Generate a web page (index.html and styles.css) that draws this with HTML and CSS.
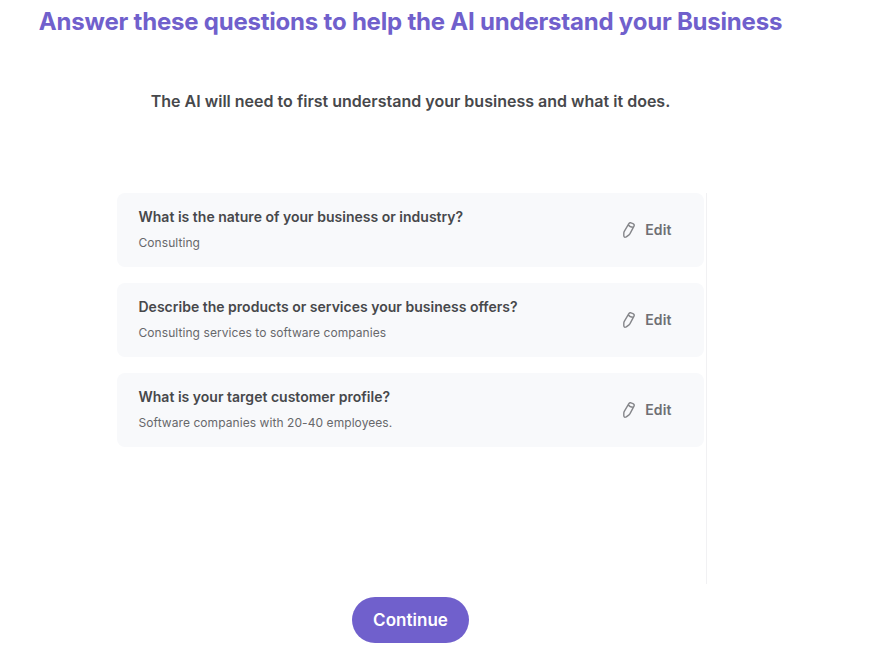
FILE: index.html
```html
<!DOCTYPE html>
<html lang="en">
<head>
<meta charset="utf-8">
<title>Business questions</title>
<link rel="stylesheet" href="styles.css">
</head>
<body>
<main class="page">
<h1 class="title">Answer these questions to help the AI understand your Business</h1>
<p class="intro">The AI will need to first understand your business and what it does.</p>
<section class="list">
<article class="card">
<div><h2 class="question">What is the nature of your business or industry?</h2><p class="answer">Consulting</p></div>
<button class="edit"><svg class="icon" viewBox="0 0 14 18"><path d="M2.3 10.4 6.7 2.8Q7.5 1.5 8.9 1.8L11 2.6Q12.8 3.5 12 5.2L8 12.7Q7.6 13.4 7 13.9L4.3 15.9Q2 17 1.8 14.8V12.2Q1.8 11.3 2.3 10.4ZM6.5 3.9Q7.7 6.2 11.1 6.3"/></svg><span>Edit</span></button>
</article>
<article class="card">
<div><h2 class="question">Describe the products or services your business offers?</h2><p class="answer">Consulting services to software companies</p></div>
<button class="edit"><svg class="icon" viewBox="0 0 14 18"><path d="M2.3 10.4 6.7 2.8Q7.5 1.5 8.9 1.8L11 2.6Q12.8 3.5 12 5.2L8 12.7Q7.6 13.4 7 13.9L4.3 15.9Q2 17 1.8 14.8V12.2Q1.8 11.3 2.3 10.4ZM6.5 3.9Q7.7 6.2 11.1 6.3"/></svg><span>Edit</span></button>
</article>
<article class="card">
<div><h2 class="question">What is your target customer profile?</h2><p class="answer">Software companies with 20-40 employees.</p></div>
<button class="edit"><svg class="icon" viewBox="0 0 14 18"><path d="M2.3 10.4 6.7 2.8Q7.5 1.5 8.9 1.8L11 2.6Q12.8 3.5 12 5.2L8 12.7Q7.6 13.4 7 13.9L4.3 15.9Q2 17 1.8 14.8V12.2Q1.8 11.3 2.3 10.4ZM6.5 3.9Q7.7 6.2 11.1 6.3"/></svg><span>Edit</span></button>
</article>
</section>
<button class="continue">Continue</button>
</main>
</body>
</html>
```
FILE: styles.css
```css
* { box-sizing: border-box; margin: 0; }
body { background: #fff; font-family: Inter, sans-serif; color: #47484b; }
button { font: inherit; border: 0; background: none; padding: 0; }
.page { width: 821px; height: 667px; display: flex; flex-direction: column; align-items: center; }
.title { margin-top: 6px; font-size: 24px; line-height: 32px; font-weight: 700; letter-spacing: -0.21px; color: #7060cc; white-space: nowrap; }
.intro { margin-top: 51px; font-size: 16px; line-height: 24px; font-weight: 600; letter-spacing: 0.01px; white-space: nowrap; }
.list { width: 590px; height: 391px; margin: 80px 0 13px 2px; padding-right: 2px; border-right: 1px solid #f1f1f3; display: flex; flex-direction: column; gap: 16px; }
.card { height: 74px; padding: 0 32px 2px 22px; border-radius: 8px; background: #f8f9fb; display: flex; align-items: center; justify-content: space-between; }
.question { font-size: 14px; line-height: 20px; font-weight: 600; letter-spacing: 0.01px; }
.answer { margin-top: 7px; font-size: 12px; line-height: 18px; letter-spacing: 0.07px; color: #67686b; }
.edit { display: flex; align-items: center; gap: 9px; padding-top: 2px; font-size: 14px; line-height: 18px; font-weight: 600; letter-spacing: 0.1px; color: #6e6f73; }
.icon { width: 14px; height: 18px; fill: none; stroke: #85868a; stroke-width: 1.4; stroke-linejoin: round; }
.continue { width: 117px; height: 46px; border-radius: 23px; background: #7060cc; color: #fff; font-size: 17px; font-weight: 600; letter-spacing: 0.03px; }
```
